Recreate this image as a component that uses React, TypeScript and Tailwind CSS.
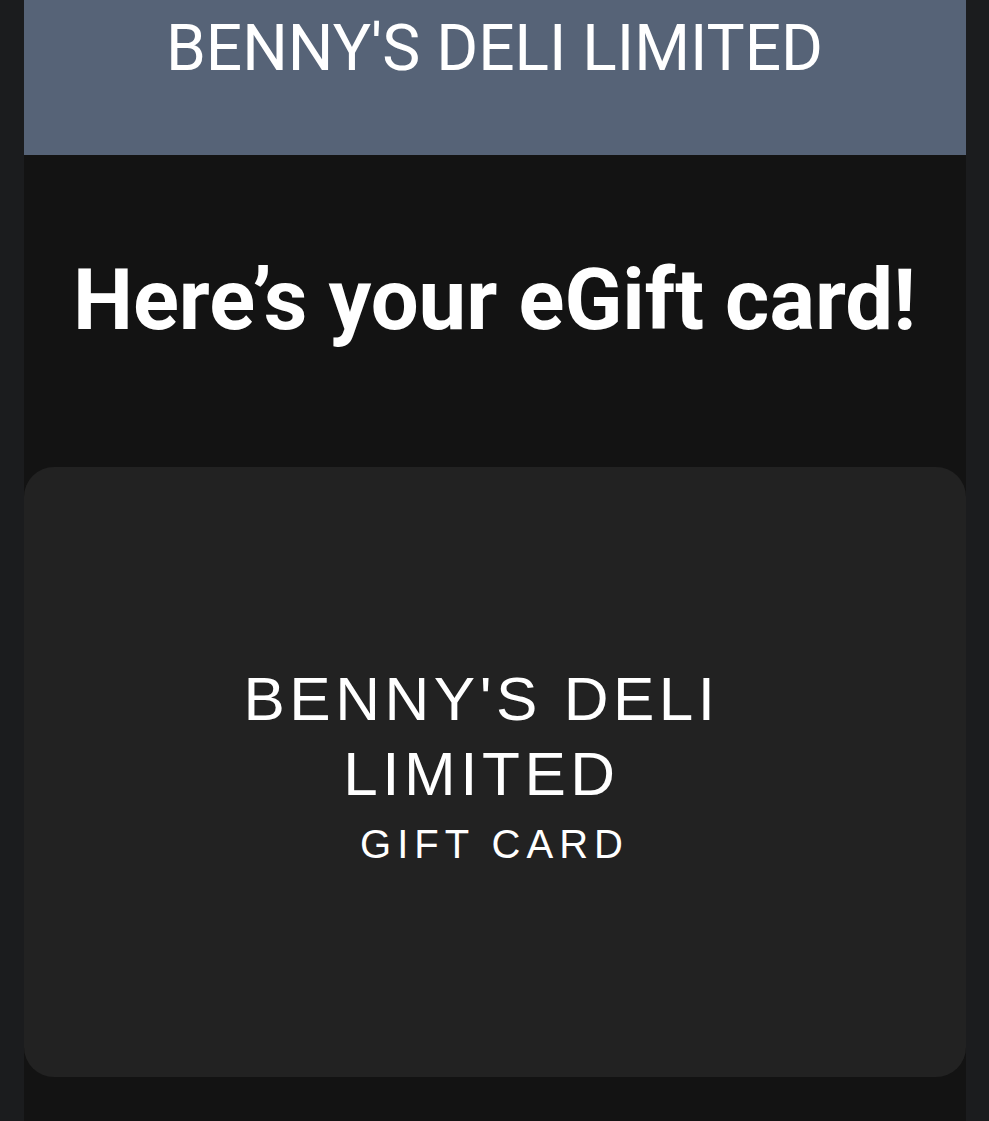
export default function App() {
  return (
    <div className="min-h-[1121px] w-full bg-[#1b1c1e] flex justify-center">
      <div className="w-[942px] bg-[#131313] flex flex-col items-stretch">
        <div className="h-[155px] bg-[#566377] flex justify-center pt-[1px]">
          <div
            className="text-white text-[64px] leading-normal"
            style={{ fontFamily: "Roboto, 'Noto Sans', sans-serif" }}
          >
            BENNY&apos;S DELI LIMITED
          </div>
        </div>
        <h1
          className="mt-[103px] text-center text-white font-bold text-[85px] leading-none"
          style={{ fontFamily: "Roboto, 'Noto Sans', sans-serif" }}
        >
          Here’s your eGift card!
        </h1>
        <div className="mt-[124px] h-[610px] rounded-[30px] bg-[#222222] flex flex-col items-center justify-center pb-[16px]"
          style={{ fontFamily: "'Liberation Sans', Arial, sans-serif" }}
        >
          <div className="text-white text-[62px] leading-[75px] tracking-[0.073em] text-center mr-[26px]">
            BENNY&apos;S DELI
          </div>
          <div className="text-white text-[62px] leading-[75px] tracking-[0.073em] text-center mr-[26px]">
            LIMITED
          </div>
          <div className="mt-[9px] text-white text-[40px] leading-[48px] tracking-[0.15em] text-center">
            GIFT CARD
          </div>
        </div>
      </div>
    </div>
  );
}
